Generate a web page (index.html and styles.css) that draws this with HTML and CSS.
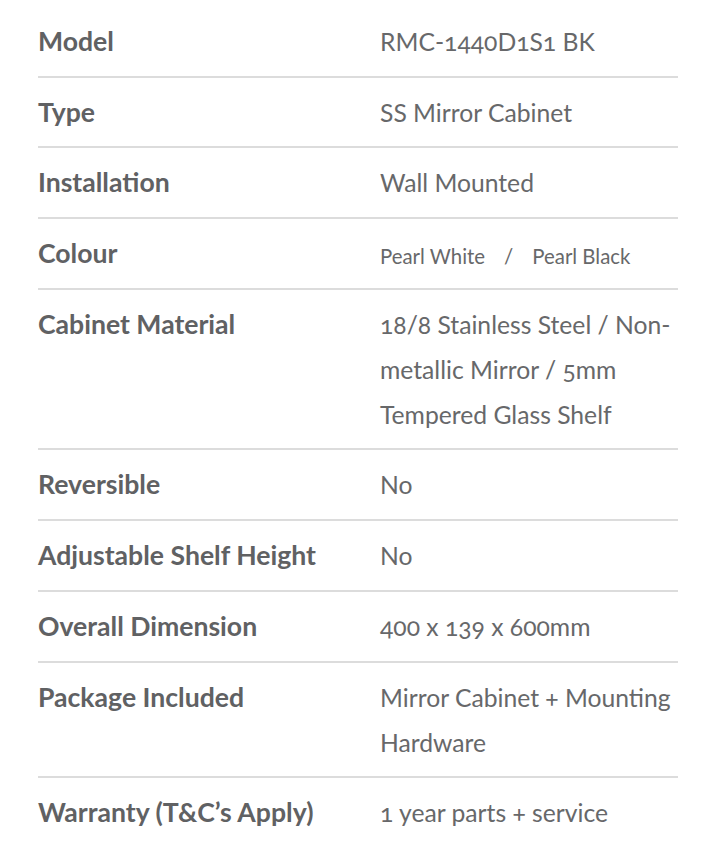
FILE: index.html
```html
<!DOCTYPE html>
<html lang="en">
<head>
<meta charset="utf-8">
<title>Specifications</title>
<link rel="stylesheet" href="styles.css">
</head>
<body>
<div class="specs">
  <div class="row"><div class="label">Model</div><div class="value">RMC-1440D1S1 BK</div></div>
  <div class="row"><div class="label">Type</div><div class="value">SS Mirror Cabinet</div></div>
  <div class="row"><div class="label">Installation</div><div class="value">Wall Mounted</div></div>
  <div class="row"><div class="label">Colour</div><div class="value colours"><span>Pearl White</span><span class="sep">/</span><span>Pearl Black</span></div></div>
  <div class="row"><div class="label">Cabinet Material</div><div class="value">18/8 Stainless Steel / Non-metallic Mirror / 5mm Tempered Glass Shelf</div></div>
  <div class="row"><div class="label">Reversible</div><div class="value">No</div></div>
  <div class="row"><div class="label">Adjustable Shelf Height</div><div class="value">No</div></div>
  <div class="row"><div class="label">Overall Dimension</div><div class="value">400 x 139 x 600mm</div></div>
  <div class="row"><div class="label">Package Included</div><div class="value">Mirror Cabinet + Mounting Hardware</div></div>
  <div class="row"><div class="label">Warranty (T&amp;C’s Apply)</div><div class="value">1 year parts + service</div></div>
</div>
</body>
</html>
```
FILE: styles.css
```css
html, body {
  margin: 0;
  padding: 0;
  background: #ffffff;
}
.specs {
  width: 640px;
  margin: 7px 0 0 38px;
  font-family: "Lato", "Open Sans", sans-serif;
  font-variant-numeric: oldstyle-nums;
}
.row {
  display: grid;
  grid-template-columns: 342px 1fr;
  padding: 12px 0 11.7px;
  border-bottom: 2px solid #dcdcdc;
  line-height: 45px;
}
.row:last-child {
  border-bottom: none;
}
.label {
  font-size: 26.6px;
  font-weight: 700;
  color: #606163;
}
.value {
  font-size: 24.7px;
  font-weight: 400;
  color: #67686a;
}
.colours {
  font-size: 20.4px;
  display: flex;
  padding-top: 5px;
  line-height: 40px;
}
.colours .sep {
  margin: 0 19px 0 19px;
}
```
